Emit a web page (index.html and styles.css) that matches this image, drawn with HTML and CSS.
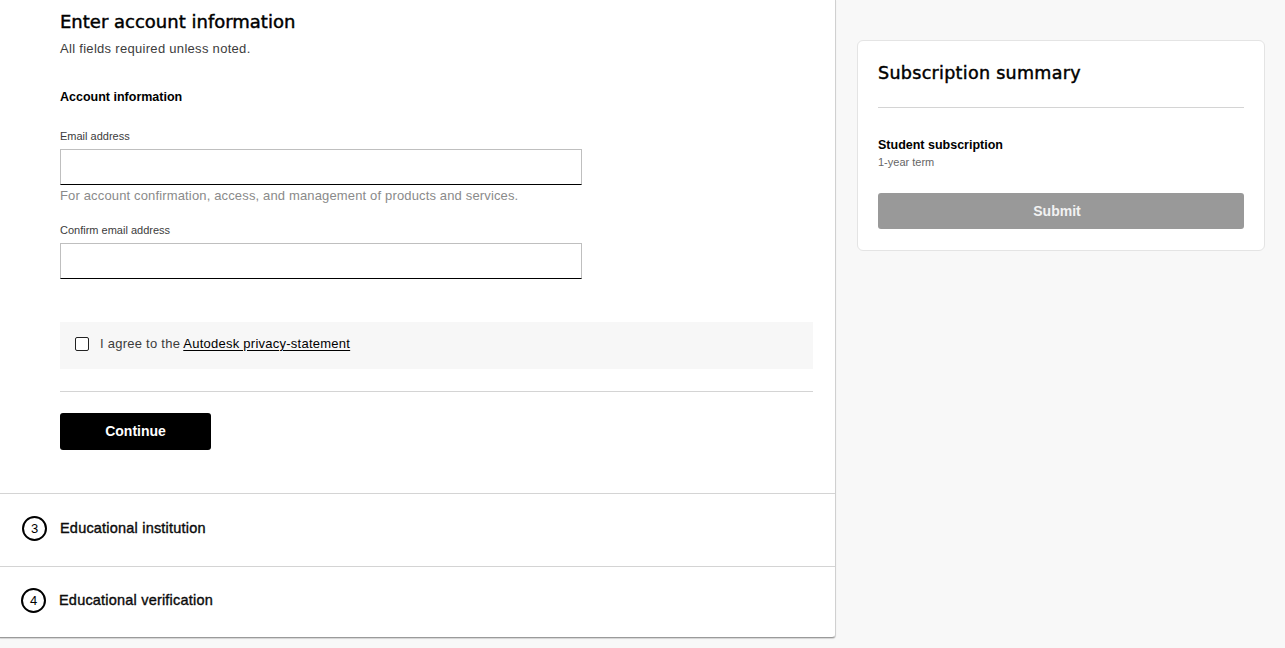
FILE: index.html
```html
<!DOCTYPE html>
<html lang="en">
<head>
<meta charset="utf-8">
<title>Checkout</title>
<link rel="stylesheet" href="styles.css">
</head>
<body>
<div class="page">
  <main class="left">
    <section class="account">
      <h1 class="title">Enter account information</h1>
      <p class="note">All fields required unless noted.</p>
      <h2 class="subhead">Account information</h2>
      <label class="label">Email address</label>
      <div class="input"></div>
      <p class="help">For account confirmation, access, and management of products and services.</p>
      <label class="label label-2">Confirm email address</label>
      <div class="input"></div>
      <div class="agree">
        <span class="checkbox"></span>
        <span class="agree-text">I agree to the <a class="link">Autodesk privacy-statement</a></span>
      </div>
      <hr class="divider">
      <button class="continue">Continue</button>
    </section>
    <div class="step">
      <span class="step-num">3</span>
      <span class="step-label">Educational institution</span>
    </div>
    <div class="step step-last">
      <span class="step-num">4</span>
      <span class="step-label">Educational verification</span>
    </div>
  </main>
  <aside class="right">
    <div class="summary">
      <h2 class="summary-title">Subscription summary</h2>
      <hr class="summary-divider">
      <p class="product">Student subscription</p>
      <p class="term">1-year term</p>
      <button class="submit">Submit</button>
    </div>
  </aside>
</div>
</body>
</html>
```
FILE: styles.css
```css
* { box-sizing: border-box; }
html, body { margin: 0; padding: 0; }
body {
  background: #f8f8f8;
  font-family: "Liberation Sans", Arial, sans-serif;
  color: #000;
}
.page {
  display: flex;
  align-items: flex-start;
  width: 1285px;
  height: 648px;
  overflow: hidden;
}
.left {
  width: 836px;
  background: #fff;
  border-right: 1px solid #d0d0d0;
  border-bottom: 1px solid #9a9a9a;
  border-bottom-right-radius: 4px;
  box-shadow: 0 1px 1px rgba(0,0,0,0.15);
  height: 638px;
  display: flex;
  flex-direction: column;
}
.account {
  padding: 10px 22px 43px 60px;
  border-bottom: 1px solid #d4d4d4;
}
.title {
  margin: 0;
  font-family: "DejaVu Sans", sans-serif;
  font-size: 18px;
  font-weight: normal;
  -webkit-text-stroke: 0.45px #000;
  line-height: 24px;
}
.note {
  margin: 7px 0 0;
  font-size: 13px;
  color: #3c3c3c;
  line-height: 16px;
  letter-spacing: 0.3px;
}
.subhead {
  margin: 32px 0 0;
  font-size: 12.5px;
  font-weight: bold;
  line-height: 16px;
}
.label {
  display: block;
  margin-top: 24px;
  font-size: 11px;
  color: #3c3c3c;
  line-height: 14px;
}
.label-2 { margin-top: 19px; }
.input {
  width: 522px;
  height: 36px;
  margin-top: 6px;
  border: 1px solid #bfbfbf;
  border-bottom: 1px solid #000;
}
.help {
  margin: 3px 0 0;
  font-size: 13px;
  color: #8a8a8a;
  line-height: 16px;
  letter-spacing: 0.15px;
}
.agree {
  margin-top: 43px;
  height: 47px;
  background: #f7f7f7;
  display: flex;
  align-items: center;
  padding-left: 15px;
  padding-bottom: 4px;
  gap: 11px;
}
.checkbox {
  width: 14px;
  height: 14px;
  border: 1.5px solid #222;
  border-radius: 2px;
  background: #fff;
}
.agree-text {
  font-size: 13px;
  color: #3c3c3c;
  letter-spacing: 0.25px;
}
.link {
  color: #000;
  text-decoration: underline;
  text-underline-offset: 2px;
}
.divider {
  margin: 22px 0 0;
  border: 0;
  border-top: 1px solid #d4d4d4;
}
.continue {
  margin-top: 21px;
  width: 151px;
  height: 37px;
  background: #000;
  color: #fff;
  border: 0;
  border-radius: 3px;
  font-family: "Liberation Sans", Arial, sans-serif;
  font-size: 14px;
  font-weight: bold;
  padding-bottom: 2px;
}
.step {
  height: 73px;
  display: flex;
  align-items: center;
  padding-left: 22px;
  padding-bottom: 3px;
  gap: 13px;
  border-bottom: 1px solid #d4d4d4;
}
.step-last { border-bottom: 0; height: 71px; padding-left: 21px; }
.step-num {
  width: 25px;
  height: 25px;
  border: 2px solid #000;
  border-radius: 50%;
  display: flex;
  align-items: center;
  justify-content: center;
  font-size: 13px;
  color: #000;
}
.step-label {
  font-size: 14.5px;
  font-weight: normal;
  -webkit-text-stroke: 0.35px #000;
  color: #111;
  letter-spacing: 0.2px;
}
.right {
  flex: 1;
  padding: 40px 20px 0 21px;
}
.summary {
  background: #fff;
  border: 1px solid #e4e4e4;
  border-radius: 6px;
  padding: 20px 20px 21px 20px;
}
.summary-title {
  margin: 0;
  font-family: "DejaVu Sans", sans-serif;
  font-size: 17.5px;
  font-weight: normal;
  -webkit-text-stroke: 0.45px #000;
  line-height: 24px;
  letter-spacing: 0.3px;
}
.summary-divider {
  margin: 22px 0 0;
  border: 0;
  border-top: 1px solid #d4d4d4;
}
.product {
  margin: 29px 0 0;
  font-size: 12.5px;
  font-weight: bold;
  line-height: 16px;
}
.term {
  margin: 2px 0 0;
  font-size: 11px;
  color: #666;
  line-height: 14px;
}
.submit {
  display: block;
  margin-top: 24px;
  width: 100%;
  height: 36px;
  background: #999;
  color: #f2f2f2;
  border: 0;
  border-radius: 3px;
  font-family: "Liberation Sans", Arial, sans-serif;
  font-size: 14px;
  font-weight: bold;
  padding-right: 14px;
}
```
